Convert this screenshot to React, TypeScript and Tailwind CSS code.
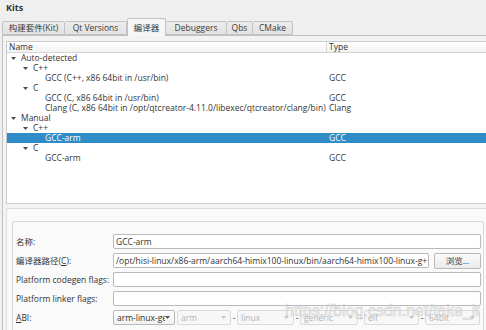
import React from "react";

type Row = { level: 0 | 1 | 2; arrow?: boolean; name: string; type?: string; selected?: boolean };

const rows: Row[] = [
  { level: 0, arrow: true, name: "Auto-detected" },
  { level: 1, arrow: true, name: "C++" },
  { level: 2, name: "GCC (C++, x86 64bit in /usr/bin)", type: "GCC" },
  { level: 1, arrow: true, name: "C" },
  { level: 2, name: "GCC (C, x86 64bit in /usr/bin)", type: "GCC" },
  { level: 2, name: "Clang (C, x86 64bit in /opt/qtcreator-4.11.0/libexec/qtcreator/clang/bin)", type: "Clang" },
  { level: 0, arrow: true, name: "Manual" },
  { level: 1, arrow: true, name: "C++" },
  { level: 2, name: "GCC-arm", type: "GCC", selected: true },
  { level: 1, arrow: true, name: "C" },
  { level: 2, name: "GCC-arm", type: "GCC" },
];

const pad = ["pl-[4px]", "pl-[16px]", "pl-[28px]"];

const Tri = ({ color = "#4a4a4a" }: { color?: string }) => (
  <svg width="5" height="3" viewBox="0 0 5 3" className="shrink-0">
    <path d="M0 0H5L2.5 3Z" fill={color} />
  </svg>
);

const tabs = [
  { label: "构建套件(Kit)", w: "w-[63px]" },
  { label: "Qt Versions", w: "w-[62px]" },
  { label: "编译器", w: "w-[39px]", active: true },
  { label: "Debuggers", w: "w-[61px]" },
  { label: "Qbs", w: "w-[26px]" },
  { label: "CMake", w: "w-[40px]" },
];

const Combo = ({ text, w, disabled }: { text: string; w: string; disabled?: boolean }) => (
  <div
    className={`${w} h-[15px] shrink-0 flex items-center justify-between pl-[3px] pr-[4px] rounded-[2px] border ${
      disabled ? "border-[#dadada] bg-[#f7f7f7] text-[#b4b4b4]" : "border-[#b9b9b9] bg-gradient-to-b from-white to-[#f1f1f1] text-[#333]"
    }`}
  >
    <span className="overflow-hidden whitespace-nowrap">{text}</span>
    <Tri color={disabled ? "#c4c4c4" : "#555"} />
  </div>
);

const Dash = () => <span className="w-[6px] text-center shrink-0 text-[#333]">-</span>;

export default function App() {
  return (
    <div className="w-[486px] h-[330px] overflow-hidden bg-[#efefef] relative font-['Open_Sans','Noto_Sans_CJK_SC',sans-serif] text-[8.5px] leading-[10px] text-[#3c3c3c]">
      <div className="h-[18px] pl-[6px] pt-[3px] font-bold text-[9px] text-[#333]">Kits</div>
      {/* tabs */}
      <div className="flex items-end h-[17px] pl-[2px] relative z-10">
        {tabs.map((t) =>
          t.active ? (
            <div
              key={t.label}
              className={`${t.w} h-[18px] -mb-[1px] flex items-center justify-center border border-b-0 border-[#c2c2c2] rounded-t-[2px] bg-[#f6f6f6] text-[#333]`}
            >
              {t.label}
            </div>
          ) : (
            <div
              key={t.label}
              className={`${t.w} h-[14px] flex items-center justify-center border border-l-0 first:border-l border-[#c2c2c2] rounded-t-[2px] bg-gradient-to-b from-[#ececec] to-[#e2e2e2] text-[#3c3c3c]`}
            >
              {t.label}
            </div>
          )
        )}
      </div>
      {/* tab pane */}
      <div className="ml-[2px] w-[500px] h-[300px] border-l border-t border-[#c2c2c2] bg-[#f3f3f3] pl-[3px] pt-[5px]">
        {/* tree */}
        <div className="w-[500px] h-[163px] border border-[#cbcbcb] bg-white overflow-hidden">
          <div className="h-[11px] flex border-b border-[#d6d6d6] bg-gradient-to-b from-white to-[#f3f3f3] text-[#333]">
            <div className="w-[320px] pl-[2px] border-r border-[#d6d6d6] flex items-center">Name</div>
            <div className="pl-[2px] flex items-center">Type</div>
          </div>
          {rows.map((r, i) => (
            <div
              key={i}
              className={`h-[10px] flex items-center whitespace-nowrap ${
                r.selected ? "bg-[#308cc6] text-white" : "text-[#333]"
              }`}
            >
              <div className={`w-[320px] shrink-0 flex items-center overflow-hidden ${pad[r.level]}`}>
                <span className="w-[5px] flex justify-center shrink-0">{r.arrow ? <Tri /> : null}</span>
                <span className="ml-[5px]">{r.name}</span>
              </div>
              <div className="pl-[2px]">{r.type}</div>
            </div>
          ))}
        </div>
        {/* details */}
        <div className="mt-[4px] w-[500px] h-[140px] border-t border-l border-[#dddddd] bg-[#fafafa] pl-[5px] pt-[12px]">
          <div className="w-[472px] h-[120px] border border-[#d9d9d9] rounded-[2px] pl-[3px] pr-[2px] pt-[12px] flex flex-col gap-[4px] text-[#333]">
            <div className="flex items-center h-[15px]">
              <div className="w-[97px] shrink-0">名称:</div>
              <div className="flex-1 h-[15px] border border-[#b9b9b9] rounded-[2px] bg-white pl-[2px] flex items-center">GCC-arm</div>
            </div>
            <div className="flex items-center h-[15px]">
              <div className="w-[97px] shrink-0">
                编译器路径(<span className="underline">C</span>):
              </div>
              <div className="w-[316px] shrink-0 h-[15px] border border-[#b9b9b9] rounded-[2px] bg-white pl-[2px] flex items-center overflow-hidden whitespace-nowrap">
                /opt/hisi-linux/x86-arm/aarch64-himix100-linux/bin/aarch64-himix100-linux-g++
              </div>
              <div className="ml-[5px] flex-1 h-[16px] border border-[#b9b9b9] rounded-[2px] bg-gradient-to-b from-[#fbfbfb] to-[#ebebeb] flex items-center justify-center">
                浏览...
              </div>
            </div>
            <div className="flex items-center h-[15px]">
              <div className="w-[97px] shrink-0">Platform codegen flags:</div>
              <div className="flex-1 h-[15px] border border-[#b9b9b9] rounded-[2px] bg-white" />
            </div>
            <div className="flex items-center h-[15px]">
              <div className="w-[97px] shrink-0">Platform linker flags:</div>
              <div className="flex-1 h-[15px] border border-[#b9b9b9] rounded-[2px] bg-white" />
            </div>
            <div className="flex items-center h-[15px]">
              <div className="w-[97px] shrink-0">
                <span className="underline">A</span>BI:
              </div>
              <Combo text="arm-linux-generic-elf-64bit" w="w-[62px]" />
              <div className="w-[2px] shrink-0" />
              <Combo text="arm" w="w-[54px]" disabled />
              <Dash />
              <Combo text="linux" w="w-[57px]" disabled />
              <Dash />
              <Combo text="generic" w="w-[58px]" disabled />
              <Dash />
              <Combo text="elf" w="w-[55px]" disabled />
              <Dash />
              <Combo text="64bit" w="w-[55px]" disabled />
            </div>
          </div>
        </div>
      </div>
      {/* watermark */}
      <div className="absolute left-[285px] top-[302px] text-[16px] leading-[18px] font-['Liberation_Sans',sans-serif] text-transparent [-webkit-text-stroke:0.6px_#d0d0d0] pointer-events-none">
        https://blog.csdn.net/take_it
      </div>
    </div>
  );
}
